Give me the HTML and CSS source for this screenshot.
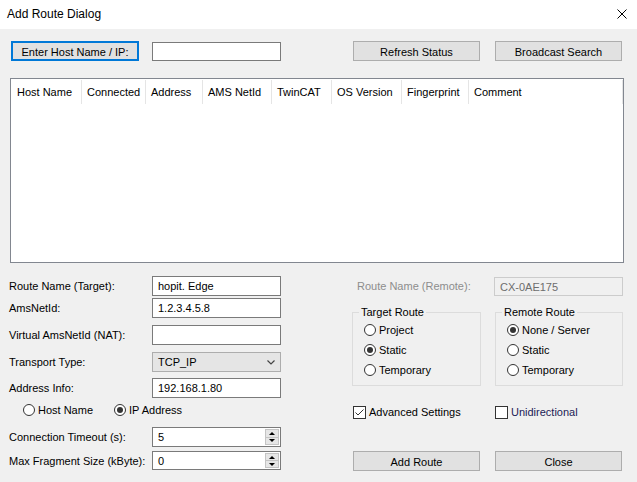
FILE: index.html
```html
<!DOCTYPE html>
<html>
<head>
<meta charset="utf-8">
<link rel="stylesheet" href="styles.css">
</head>
<body>
<div class="titlebar">
  <span class="title">Add Route Dialog</span>
  <svg class="close" width="10" height="10" viewBox="0 0 10 10"><path d="M0.5 0.5 L9.5 9.5 M9.5 0.5 L0.5 9.5" stroke="#000" stroke-width="1" fill="none"/></svg>
</div>
<div class="main">
  <div class="toolbar">
    <button class="btn btn-default">Enter Host Name / IP:</button>
    <div class="field host-input"></div>
    <div class="spacer"></div>
    <button class="btn btn-wide">Refresh Status</button>
    <button class="btn btn-wide gap">Broadcast Search</button>
  </div>
  <div class="list">
    <div class="list-head">
      <span class="first">Host Name</span>
      <span>Connected</span>
      <span>Address</span>
      <span>AMS NetId</span>
      <span>TwinCAT</span>
      <span>OS Version</span>
      <span>Fingerprint</span>
      <span>Comment</span>
    </div>
  </div>
  <div class="lower">
    <div class="left">
      <div class="frow">
        <span>Route Name (Target):</span>
        <div class="field">hopit. Edge</div>
      </div>
      <div class="frow m2">
        <span>AmsNetId:</span>
        <div class="field">1.2.3.4.5.8</div>
      </div>
      <div class="frow m7">
        <span>Virtual AmsNetId (NAT):</span>
        <div class="field"></div>
      </div>
      <div class="frow m7">
        <span>Transport Type:</span>
        <div class="combo"><span>TCP_IP</span><svg width="8" height="5" viewBox="0 0 8 5"><path d="M0.5 0.5 L4 4 L7.5 0.5" stroke="#444" stroke-width="1.2" fill="none"/></svg></div>
      </div>
      <div class="frow m6">
        <span>Address Info:</span>
        <div class="field">192.168.1.80</div>
      </div>
      <div class="radio-row">
        <span class="radio"><i></i>Host Name</span>
        <span class="radio on ip"><i></i>IP Address</span>
      </div>
      <div class="frow m5">
        <span>Connection Timeout (s):</span>
        <div class="spin"><span class="val">5</span><span class="arrows"><b class="up"></b><b class="down"></b></span></div>
      </div>
      <div class="frow m4 h19">
        <span>Max Fragment Size (kByte):</span>
        <div class="spin"><span class="val">0</span><span class="arrows"><b class="up"></b><b class="down"></b></span></div>
      </div>
    </div>
    <div class="right">
      <div class="rrow">
        <span class="disabled-label">Route Name (Remote):</span>
        <div class="field disabled">CX-0AE175</div>
      </div>
      <div class="groups">
        <fieldset class="group g-target">
          <legend>Target Route</legend>
          <div class="radios">
            <span class="radio"><i></i>Project</span>
            <span class="radio on"><i></i>Static</span>
            <span class="radio"><i></i>Temporary</span>
          </div>
        </fieldset>
        <fieldset class="group g-remote">
          <legend>Remote Route</legend>
          <div class="radios">
            <span class="radio on"><i></i>None / Server</span>
            <span class="radio"><i></i>Static</span>
            <span class="radio"><i></i>Temporary</span>
          </div>
        </fieldset>
      </div>
      <div class="checks">
        <span class="check first-check"><i><svg width="11" height="11" viewBox="0 0 11 11"><path d="M1.5 5.5 L4 8 L9.5 2.5" stroke="#333" stroke-width="1" fill="none"/></svg></i>Advanced Settings</span>
        <span class="check navy"><i></i>Unidirectional</span>
      </div>
      <div class="actions">
        <button class="btn btn-wide">Add Route</button>
        <button class="btn btn-wide">Close</button>
      </div>
    </div>
  </div>
</div>
</body>
</html>
```

FILE: styles.css
```css
* { box-sizing: border-box; }
html, body { margin: 0; padding: 0; }
body {
  width: 637px;
  height: 482px;
  overflow: hidden;
  background: #f0f0f0;
  font-family: "Liberation Sans", Arial, sans-serif;
  font-size: 11px;
  color: #000;
}
.titlebar {
  height: 29px;
  background: #fff;
  display: flex;
  align-items: center;
  justify-content: space-between;
  padding: 0 10px 1px 7px;
  font-size: 12px;
}
.main { padding: 12px 13px 0 10px; }
.toolbar {
  display: flex;
  align-items: flex-start;
  height: 20px;
  padding: 0 2px 0 1px;
}
.btn {
  height: 20px;
  margin: 0;
  padding: 1px 0 0 0;
  background: #e1e1e1;
  border: 1px solid #adadad;
  font-family: inherit;
  font-size: 11px;
  color: #000;
  text-align: center;
}
.btn-default { width: 128px; border: 2px solid #0078d7; }
.btn-wide { width: 127px; }
.gap { margin-left: 15px; }
.spacer { flex: 1; }
.field {
  width: 129px;
  height: 20px;
  background: #fff;
  border: 1px solid #7a7a7a;
  padding-left: 5px;
  line-height: 18px;
  white-space: nowrap;
}
.host-input { margin-left: 13px; margin-top: 1px; height: 19px; }
.list {
  margin-top: 17px;
  height: 185px;
  background: #fff;
  border: 1px solid #828790;
}
.list-head {
  display: grid;
  grid-template-columns: 71px 64px 57px 69px 60px 70px 67px 1fr;
  margin-top: 1px;
}
.list-head span {
  height: 24px;
  line-height: 24px;
  padding-left: 5px;
  border-right: 1px solid #e5e5e5;
  white-space: nowrap;
}
.list-head .first { padding-left: 6px; }
.lower {
  display: flex;
  justify-content: space-between;
  margin: 13px 1px 0 -1px;
}
.left { width: 272px; }
.frow {
  display: flex;
  align-items: center;
  justify-content: space-between;
  height: 20px;
}
.h19 { height: 19px; }
.h19 .spin { height: 19px; }
.m2 { margin-top: 2px; }
.m4 { margin-top: 4px; }
.m5 { margin-top: 5px; }
.m6 { margin-top: 6px; }
.m7 { margin-top: 7px; }
.combo {
  width: 129px;
  height: 20px;
  background: #e5e5e5;
  border: 1px solid #adadad;
  display: flex;
  align-items: center;
  justify-content: space-between;
  padding: 0 5px 0 5px;
}
.spin {
  width: 129px;
  height: 20px;
  background: #fff;
  border: 1px solid #7a7a7a;
  display: flex;
}
.spin .val { flex: 1; padding-left: 5px; line-height: 18px; }
.arrows {
  width: 16px;
  display: flex;
  flex-direction: column;
  padding: 1px;
}
.arrows b {
  flex: 1;
  background: #e6e6e6;
  border: 1px solid #c4c4c4;
  display: flex;
  align-items: center;
  justify-content: center;
}
.arrows b + b { border-top: none; }
.arrows .up::after {
  content: "";
  border-left: 3px solid transparent;
  border-right: 3px solid transparent;
  border-bottom: 3px solid #000;
}
.arrows .down::after {
  content: "";
  border-left: 3px solid transparent;
  border-right: 3px solid transparent;
  border-top: 3px solid #000;
}
.radio-row {
  display: flex;
  align-items: center;
  height: 24px;
  padding-left: 14px;
}
.radio {
  display: flex;
  align-items: center;
  gap: 3px;
  white-space: nowrap;
}
.radio i {
  width: 12px;
  height: 12px;
  border: 1px solid #333;
  border-radius: 50%;
  background: #fff;
  display: flex;
  align-items: center;
  justify-content: center;
}
.radio.on i::after {
  content: "";
  width: 6px;
  height: 6px;
  border-radius: 50%;
  background: #333;
}
.radio-row .ip { margin-left: 21px; }
.right { width: 271px; }
.rrow {
  display: flex;
  align-items: center;
  justify-content: space-between;
  height: 20px;
  padding-left: 5px;
}
.disabled-label { color: #8d8d8d; }
.field.disabled {
  background: #f0f0f0;
  border-color: #cccccc;
  color: #6d6d6d;
  height: 19px;
}
.groups {
  display: flex;
  justify-content: space-between;
  margin-top: 10px;
}
.group {
  margin: 0;
  min-width: 0;
  border: 1px solid #dcdcdc;
  padding: 0 0 5px 6px;
}
.g-target { width: 129px; }
.g-remote { width: 128px; }
.group legend {
  padding: 0 2px;
  line-height: 13px;
  font-size: 11px;
}
.radios {
  padding: 1px 0 0 5px;
  display: flex;
  flex-direction: column;
}
.radios .radio { height: 20px; }
.checks {
  display: flex;
  align-items: center;
  height: 20px;
  margin-top: 16px;
  padding-left: 1px;
}
.check {
  display: flex;
  align-items: center;
  gap: 3px;
  white-space: nowrap;
}
.check i {
  width: 13px;
  height: 13px;
  border: 1px solid #333;
  background: #fff;
  display: flex;
  align-items: center;
  justify-content: center;
}
.first-check { width: 142px; }
.navy { color: #1b1b55; }
.actions {
  display: flex;
  justify-content: space-between;
  margin-top: 29px;
  padding: 0 1px;
}
```
